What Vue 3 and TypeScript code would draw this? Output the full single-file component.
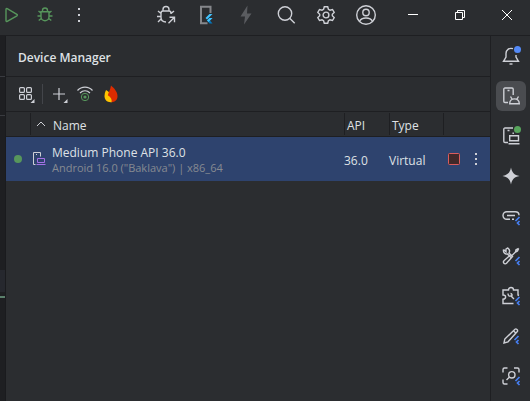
<script setup lang="ts">
import { ref } from 'vue'

interface Device {
  name: string
  details: string
  api: string
  type: string
}

const devices = ref<Device[]>([
  { name: 'Medium Phone API 36.0', details: 'Android 16.0 ("Baklava") | x86_64', api: '36.0', type: 'Virtual' },
])
</script>

<template>
  <div class="window">
    <header class="titlebar">
      <div class="run-tools">
        <button aria-label="Run">
          <svg class="green" viewBox="0 0 20 20"><path d="M5 4.300v11.400c0 .7.6 1 1.200.7l9.700-5.600c.6-.4.6-1.100 0-1.500L6.200 3.600c-.6-.3-1.200 0-1.200.7z" /></svg>
        </button>
        <button aria-label="Debug">
          <svg class="green" viewBox="0 0 20 20"><path d="M7.500 6.500V5.500a2.500 2.500 0 0 1 5 0v1M6 6.700h8v5a4 4 0 0 1-8 0zM6 8 3.500 6M14 8l2.500-2M6 11H2.500M14 11h3.500M6.200 13.500l-2.500 2M13.800 13.500l2.500 2" /></svg>
        </button>
        <button aria-label="More actions">
          <svg class="fill" viewBox="0 0 20 20"><path d="M9 3h2v2H9zM9 9h2v2H9zM9 15h2v2H9z" /></svg>
        </button>
      </div>
      <div class="right-tools">
        <button aria-label="Attach debugger">
          <svg viewBox="0 0 20 20"><path d="M7 5.500V4.500a3 3 0 0 1 6 0v1M10 17c-3-.2-5-1.800-5-4.500V8c0-1.300.8-2 2-2h6c1.300 0 2 .7 2 2v1M5 8.500 2 6M15 8.500 18 6M5 11.500H1M5 14 2 17M12.500 18.300l6-6M13.500 12.200h5v5" /></svg>
        </button>
        <button aria-label="Flutter device">
          <svg viewBox="0 0 20 20"><path class="dim" d="M14.500 8V1.700H5v16.600h6.500" /><path class="sky" d="M16.500 9h-3L9.500 13l1.500 1.500z" /><path class="azure" d="M16.500 13h-3L11 15.500l2.500 3h3L14 15.500z" /><path class="sky" d="M16.500 13h-3L11 15.500l1.500 1.500z" /></svg>
        </button>
        <button aria-label="Hot reload" disabled>
          <svg class="muted" viewBox="0 0 20 20"><path d="M11.500.5 4.500 11.500H9L8 19.500 15.500 8.500H11z" /></svg>
        </button>
        <button aria-label="Search">
          <svg viewBox="0 0 20 20"><circle cx="9" cy="8.500" r="6.700" /><path d="m13.700 13.300 5 5" /></svg>
        </button>
        <button aria-label="Settings">
          <svg viewBox="0 0 20 20"><circle cx="10" cy="10" r="2.900" /><path d="M8.300 1.800h3.400l.7 2.500 1.600.9 2.500-.7 1.700 2.900-1.900 1.800v1.600l1.900 1.800-1.700 2.900-2.500-.7-1.600.9-.7 2.500H8.300l-.7-2.500-1.600-.9-2.500.7-1.700-2.900 1.900-1.800V9.200L1.800 7.400l1.700-2.900 2.500.7 1.600-.9z" /></svg>
        </button>
        <button aria-label="Account">
          <svg viewBox="0 0 20 20"><circle cx="10" cy="10" r="9.300" /><circle cx="10" cy="7.500" r="3.200" /><path d="M3.500 16.500c1-2.500 3.500-3.500 6.500-3.500s5.500 1 6.500 3.500" /></svg>
        </button>
      </div>
      <div class="window-controls">
        <button aria-label="Minimize"><svg class="crisp" viewBox="0 0 20 20"><path d="M5 9.500h10" /></svg></button>
        <button aria-label="Restore"><svg class="crisp" viewBox="0 0 20 20"><path d="M5.500 7.500h7v7h-7zM7.500 7V5.500h7v7H13" /></svg></button>
        <button aria-label="Close"><svg class="crisp" viewBox="0 0 20 20"><path d="m5 5 10 10M15 5 5 15" /></svg></button>
      </div>
    </header>

    <div class="workspace">
      <div class="editor-edge">
        <span class="edge-tabs"></span>
        <span class="edge-ruler"></span>
        <span class="edge-code"></span>
        <span class="edge-block"></span>
        <span class="edge-mark"></span>
      </div>

      <main class="panel">
        <h1>Device Manager</h1>
        <div class="toolbar">
          <button aria-label="Group devices">
            <svg viewBox="0 0 20 20"><rect x="3.600" y="3.600" width="4.800" height="4.800" rx="1" /><rect x="10.600" y="3.600" width="4.800" height="4.800" rx="1" /><rect x="3.600" y="10.600" width="4.800" height="4.800" rx="1" /><rect x="10.600" y="10.600" width="4.800" height="4.800" rx="1" /><path class="corner" d="M18.500 15v4h-4z" /></svg>
          </button>
          <span class="divider"></span>
          <button aria-label="Add device">
            <svg viewBox="0 0 20 20"><path d="M10 4v12M4 10h12" /><path class="corner" d="M18.500 15v4h-4z" /></svg>
          </button>
          <button aria-label="Pair devices using Wi-Fi">
            <svg viewBox="0 0 20 20"><path d="M2.500 6.500c4-4.500 11-4.500 15 0M5 9c3-3 7-3 10 0" /><circle class="wifi" cx="10" cy="13" r="3.700" /><circle class="wifi-dot" cx="10" cy="13" r="1.600" /></svg>
          </button>
          <button aria-label="Firebase">
            <svg viewBox="0 0 20 20"><path class="gold" d="M5 6c3 1.500 6 5 6.500 12C6.500 19 3.500 16 3.500 12 3.500 10 4 8 5 6z" /><path class="flame" d="M10 1.500C13.500 4.500 16.500 8 16.500 12c0 4-2.500 6-6 6.200.7-2.700-.5-5-3.700-7C7.500 8 9.500 5.500 10 1.500z" /></svg>
          </button>
        </div>

        <table>
          <colgroup><col class="c-status"><col><col class="c-api"><col class="c-type"><col class="c-actions"></colgroup>
          <thead>
            <tr>
              <th aria-label="Status"></th>
              <th><span class="name-heading"><svg class="caret" viewBox="0 0 10 10"><path d="m1 5 4-4 4 4" /></svg>Name</span></th>
              <th>API</th>
              <th>Type</th>
              <th aria-label="Actions"></th>
            </tr>
          </thead>
          <tbody>
            <tr v-for="device in devices" :key="device.name">
              <td><span class="online"></span></td>
              <td>
                <div class="device">
                  <svg class="device-icon" viewBox="0 0 14 14"><path d="M3.500 12.500h-2v-12h7v4M5 2.500H4" /><path class="purple" d="M5.500 6.500h7v4h-7zM4.500 12.500h9" /></svg>
                  <div class="device-text">
                    <div class="device-name">{{ device.name }}</div>
                    <div class="device-details">{{ device.details }}</div>
                  </div>
                </div>
              </td>
              <td class="value">{{ device.api }}</td>
              <td class="value">{{ device.type }}</td>
              <td>
                <div class="actions">
                  <button aria-label="Stop"><svg class="stop" viewBox="0 0 14 14"><rect x="1.500" y="1.500" width="11" height="11" rx="1" /></svg></button>
                  <button aria-label="Device menu"><svg class="fill" viewBox="0 0 14 14"><path d="M6 1h2v2H6zM6 6h2v2H6zM6 11h2v2H6z" /></svg></button>
                </div>
              </td>
            </tr>
          </tbody>
        </table>
      </main>

      <nav class="rail" aria-label="Tool windows">
        <button aria-label="Notifications">
          <svg viewBox="0 0 20 20"><path d="M12 2.700C8 1.500 5 4 5 7.500V11l-2.500 4.300h15L15 11V9" /><path d="M8.500 18h3" /><circle class="dot-blue" cx="16.500" cy="3.500" r="3.500" /></svg>
        </button>
        <button class="active" aria-label="Device Manager">
          <svg viewBox="0 0 20 20"><path d="M7 16.500H4a1.200 1.200 0 0 1-1.200-1.200v-12A1.200 1.200 0 0 1 4 2h7a1.200 1.200 0 0 1 1.200 1.200V9M6.500 4.500h2M8.700 17.700c0-6.500 9.600-6.500 9.600 0zM11 13l-1.500-2.500M16 13l1.500-2.500" /></svg>
        </button>
        <button aria-label="Running Devices">
          <svg viewBox="0 0 20 20"><path d="M7 16.500H4a1.200 1.200 0 0 1-1.200-1.200v-12A1.200 1.200 0 0 1 4 2h8M12.200 6.500V8M6.500 4.500h2M8.700 9.700h8.800v5H8.700zM7.500 17.700h11" /><circle class="dot-green" cx="16.500" cy="3.500" r="3.500" /></svg>
        </button>
        <button aria-label="Gemini">
          <svg class="fill" viewBox="0 0 20 20"><path d="M10 1.500c1 5 3 7.500 8.500 8.500-5.500 1-7.500 3.500-8.500 8.500-1-5-3-7.500-8.500-8.500 5.500-1 7.500-3.500 8.500-8.500z" /></svg>
        </button>
        <button aria-label="Deep links">
          <svg viewBox="0 0 20 20"><path d="M9 13.300H5.800a3.800 3.800 0 0 1 0-7.600h8.400c2.300 0 3.800 1.500 3.800 3.500M6 9.500h8M11 13.300h2" /><path class="flutter" d="m18.500 11-4 4M18.500 15l-2 2 2 2" /></svg>
        </button>
        <button aria-label="Flutter DevTools">
          <svg viewBox="0 0 20 20"><path d="M2.500 3.500 5 5.700V3l1.500-1C8.500 3 9 5 8 7l4 4M2.500 3.500C2 6.500 4 8.500 6.500 8l4 4M17.700 2.500 15 3.800 14.500 6 11 9.500M17.700 2.500 16.500 5 14.500 6M9.500 9 3.200 14.500c-2 2 .5 4.500 2.300 2.800L11 11" /><path class="flutter" d="m18.500 11-4 4M18.500 15l-2 2 2 2" /></svg>
        </button>
        <button aria-label="Flutter extensions">
          <svg viewBox="0 0 20 20"><path d="M12.500 17.500H2v-4.300c3.500 0 3.500-4.200 0-4.200V4h5.500c0-3.300 5-3.300 5 0H17v5l1 .5" /><path d="M7 7.500c0 2 1 3 3 2.500l3 3M9.500 7.500c1.500.2 2 1.500 1 3" /><path class="flutter" d="m18.500 11-4 4M18.500 15l-2 2 2 2" /></svg>
        </button>
        <button aria-label="Flutter property editor">
          <svg viewBox="0 0 20 20"><path d="m3 17 .8-4L14 3.200c1.200-1 3.300 1 2.300 2.300L7 15.800zM12.500 4.700 15 7.200" /><path class="flutter" d="m17.500 10-4 4M17.500 14l-2 2 2 2" /></svg>
        </button>
        <button aria-label="Flutter inspector">
          <svg viewBox="0 0 20 20"><path d="M2 6.500V3.500A1.500 1.500 0 0 1 3.500 2h3M13 2h3.500A1.500 1.500 0 0 1 18 3.500v3M2 13.500v3A1.500 1.500 0 0 0 3.500 18h3M8.500 11l-3 3" /><circle cx="10.800" cy="8.800" r="3.200" /><path class="flutter" d="m18.500 11-4 4M18.500 15l-2 2 2 2" /></svg>
        </button>
      </nav>
    </div>
  </div>
</template>

<style>
body {
  background: #2b2d30;
}
</style>

<style scoped>
.window {
  display: flex;
  flex-direction: column;
  min-height: 100vh;
  background: #2b2d30;
  color: #dfe1e5;
  font: 12px/16px "Open Sans", "Noto Sans", sans-serif;
}

button {
  display: flex;
  align-items: center;
  justify-content: center;
  padding: 0;
  border: 0;
  background: none;
  color: inherit;
}

svg {
  display: block;
  flex: none;
  width: 20px;
  height: 20px;
  fill: none;
  stroke: #ced0d6;
  stroke-width: 1.4;
}

.green { stroke: #57965c; }
.fill { fill: #ced0d6; stroke: none; }
.muted { fill: #5a5c60; stroke: none; }
.dim { stroke: #85878b; stroke-width: 2; }
.sky { fill: #40c4ff; stroke: none; }
.azure { fill: #0277bd; stroke: none; }
.crisp { stroke: #fff; stroke-width: 1; }
.corner { fill: #ced0d6; stroke: none; }
.wifi { stroke: #57965c; stroke-width: 1; }
.wifi-dot { fill: #57965c; stroke: none; }
.flame { fill: #dd2c00; stroke: none; }
.gold { fill: #ffc400; stroke: none; }
.purple { stroke: #a571e6; }
.dot-blue { fill: #548af7; stroke: none; }
.dot-green { fill: #57a45c; stroke: none; }
.flutter { stroke: #467ff2; stroke-width: 1.7; }

.titlebar {
  display: flex;
  height: 30px;
  padding-bottom: 5px;
  border-bottom: 1px solid #1e1f22;
}

.run-tools,
.right-tools,
.window-controls {
  display: flex;
}

.run-tools { flex: 1; }
.run-tools button { width: 34px; }
.run-tools button:first-child { width: 28px; padding-right: 6px; }
.right-tools { margin-right: 3px; }
.right-tools button { width: 40px; }
.window-controls button { width: 47px; }

.workspace {
  display: flex;
  flex: 1;
}

.editor-edge {
  display: flex;
  flex-direction: column;
  width: 5px;
  border-right: 1px solid #1a1b1e;
  background: #1e1f22;
}

.edge-tabs { height: 40px; border-bottom: 1px solid #393b40; }
.edge-ruler { height: 38px; border-bottom: 1px solid #393b40; }
.edge-code { height: 154px; }
.edge-block { height: 22px; background: #26282e; }
.edge-mark { height: 2px; margin-top: 4px; background: #5b806c; }

.panel {
  flex: 1;
  min-width: 0;
  border-right: 1px solid #1e1f22;
}

h1 {
  margin: 0;
  padding: 14px 12px 10px;
  border-bottom: 1px solid #1e1f22;
  font-size: 12px;
  line-height: 16px;
  font-weight: 600;
}

.toolbar {
  display: flex;
  align-items: center;
  height: 34px;
  padding-left: 7px;
  border-bottom: 1px solid #1e1f22;
}

.toolbar button { width: 26px; }
.toolbar svg { stroke-width: 1.2; }
.divider { width: 1px; height: 20px; margin: 0 3px; background: #43454a; }

table {
  width: 100%;
  border-collapse: collapse;
  table-layout: fixed;
}

.c-status { width: 24px; }
.c-api { width: 45px; }
.c-type { width: 54px; }
.c-actions { width: 47px; }

th,
td {
  padding: 0;
  font-weight: 400;
  text-align: left;
}

th {
  height: 20px;
  padding: 4px 0 0 3px;
  background: linear-gradient(#1e1f22, #1e1f22) left center / 1px 22px no-repeat;
}

th:first-child { background: none; }
thead { border-bottom: 1px solid #1e1f22; }
tbody tr { height: 44px; background: #2e436e; }

.name-heading {
  display: flex;
  align-items: center;
  gap: 7px;
  padding-left: 3px;
}

.caret { width: 10px; height: 10px; stroke-width: 1; }

.online {
  display: block;
  width: 8px;
  height: 8px;
  margin-left: 8px;
  border-radius: 50%;
  background: #57965c;
}

.device {
  display: flex;
  align-items: center;
  gap: 6px;
  padding-left: 2px;
}

.device-icon { width: 14px; height: 14px; stroke-width: 1; }
.device-text { padding-top: 2px; white-space: nowrap; }
.device-details { color: #868a91; font-size: 11px; line-height: 14px; }
.value { padding-top: 4px; }

.actions { display: flex; padding-left: 4px; gap: 8px; }
.actions svg { width: 14px; height: 14px; }
.actions .stop { fill: #402929; stroke: #db5c5c; stroke-width: 1; }

.rail {
  display: flex;
  flex-direction: column;
  align-items: center;
  gap: 10px;
  width: 39px;
  padding-top: 5px;
}

.rail button {
  width: 30px;
  height: 30px;
  border-radius: 6px;
}

.rail .active { background: #4a4c50; }
</style>
